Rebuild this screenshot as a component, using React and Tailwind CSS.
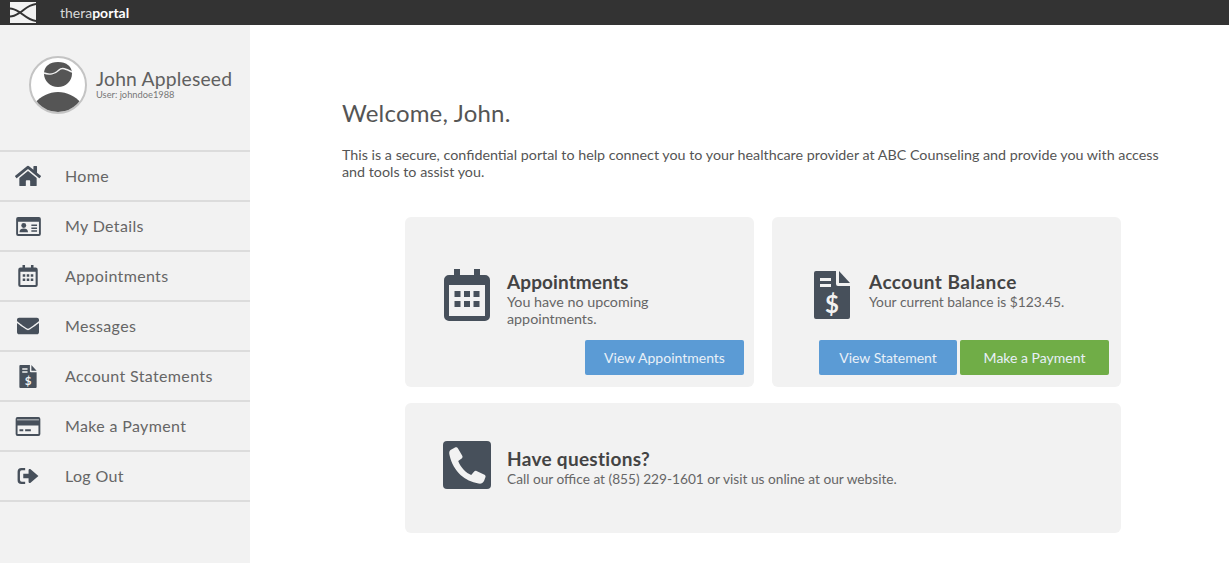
import { FaHome, FaEnvelope } from 'react-icons/fa';

const font = { fontFamily: 'Lato, "Open Sans", sans-serif' };

function IdIcon({ className }) {
  return (
    <svg viewBox="0 0 26 20" className={className} fill="#47505b">
      <path fillRule="evenodd" d="M2 0h22a2 2 0 0 1 2 2v16a2 2 0 0 1-2 2H2a2 2 0 0 1-2-2V2a2 2 0 0 1 2-2zM2 5v13h22V5z" />
      <circle cx="8" cy="9" r="2.6" />
      <path d="M3.500 16c0-3 2-4 4.500-4s4.500 1 4.500 4zM16 8h6v1.500h-6zM16 11h6v1.500h-6zM16 14h6v1.500h-6z" />
    </svg>
  );
}

function CalendarIcon({ className }) {
  return (
    <svg viewBox="0 0 46 52" className={className} fill="#47505b">
      <path fillRule="evenodd" d="M10 0h6v6h14V0h6v6h5a5 5 0 0 1 5 5v36a5 5 0 0 1-5 5H5a5 5 0 0 1-5-5V11a5 5 0 0 1 5-5h5zM5 16v31h36V16z" />
      <path d="M10.500 22h6v6h-6zM20 22h6v6h-6zM29.500 22h6v6h-6zM10.500 32h6v6h-6zM20 32h6v6h-6zM29.500 32h6v6h-6z" />
    </svg>
  );
}

function StatementIcon({ className }) {
  return (
    <svg viewBox="0 0 36 48" className={className}>
      <path fill="#47505b" d="M2 0h20v13a2 2 0 0 0 2 2h12v31a2 2 0 0 1-2 2H2a2 2 0 0 1-2-2V2a2 2 0 0 1 2-2z" />
      <path fill="#47505b" d="M25 0l11 12H25z" />
      <path fill="#f2f2f2" d="M6 7h11v3H6zM6 13h11v3H6z" />
      <text x="18" y="42" textAnchor="middle" fontSize="24" fontWeight="700" fill="#f2f2f2" fontFamily="Lato, sans-serif">$</text>
    </svg>
  );
}

function CardIcon({ className }) {
  return (
    <svg viewBox="0 0 26 20" className={className} fill="#47505b">
      <path fillRule="evenodd" d="M2 0h22a2 2 0 0 1 2 2v16a2 2 0 0 1-2 2H2a2 2 0 0 1-2-2V2a2 2 0 0 1 2-2zM1.500 2.500v1h23v-1zM2 9v9h22V9z" />
      <path d="M4 13h4v2H4zM10 13h6v2h-6z" />
    </svg>
  );
}

function LogOutIcon({ className }) {
  return (
    <svg viewBox="0 0 22 19" className={className} fill="#47505b">
      <path d="M4 1h4v2.500H4.500a2 2 0 0 0-2 2v8a2 2 0 0 0 2 2H8V18H4a4 4 0 0 1-4-4V5a4 4 0 0 1 4-4z" />
      <path d="M12 2.500c.5-.5 1.300-.5 1.700 0L22 9.500l-8.300 7c-.4.500-1.200.5-1.700 0-.3-.2-.4-.6-.4-1V12H6V7h5.600V3.500c0-.4.100-.8.400-1z" />
    </svg>
  );
}

function PhoneIcon({ className }) {
  return (
    <svg viewBox="0 0 48 48" className={className}>
      <rect width="48" height="48" rx="4" fill="#47505b" />
      <path fill="#f2f2f2" d="M12 6.500 7.500 9c-1.500 1-1.500 3-1 5 2 9 6 15 11 20 5 4.500 11 7 18 8.500 2.500.5 4.500-.5 5.500-2.500l1.500-4c.3-1-.2-1.800-1-2.300l-8-3.700c-.8-.4-1.700-.2-2.300.5l-3 3.500c-5-2-10.500-7.500-13-14l3.500-2.500c.8-.6 1-1.500.7-2.400L15 7.500c-.5-1-1.800-1.500-3-1z" />
    </svg>
  );
}

function Logo() {
  return (
    <svg viewBox="0 0 26 21" className="h-[21px] w-[26px]" fill="none">
      <rect width="26" height="21" fill="#f2f2f2" />
      <path stroke="#333" strokeWidth="2" d="M0 6.500C4 6.500 6 8 10 10.500 14 13 18 18 26 19M0 14.500C4 14.500 6 13 10 10.500 14 8 18 3 26 2" />
    </svg>
  );
}

function Avatar() {
  return (
    <div className="h-[58px] w-[58px] overflow-hidden rounded-full border-2 border-[#c4c4c4] bg-white">
      <svg viewBox="0 0 54 54" className="h-full w-full">
        <path fill="#555" d="M27 4c8.500 0 14 4.500 14 11.500C41 23 35 29 27 29S13 23 13 15.500C13 8.500 18.500 4 27 4z" />
        <path fill="none" stroke="#f2f2f2" strokeWidth="1.500" d="M13 15C18 17 24 16 28 12 31 9 35 11 41 14" />
        <path fill="#555" d="M4 45c6-7 14-11 23-11s17 4 23 11c-5 6-14 9-23 9S9 51 4 45z" />
      </svg>
    </div>
  );
}

const navItems = [
  { label: 'Home', icon: <FaHome className="h-[24px] w-[26px] text-[#47505b]" /> },
  { label: 'My Details', icon: <IdIcon className="h-[19px] w-[25px]" /> },
  { label: 'Appointments', icon: <CalendarIcon className="h-[22px] w-[20px]" /> },
  { label: 'Messages', icon: <FaEnvelope className="h-[22px] w-[24px] text-[#47505b]" /> },
  { label: 'Account Statements', icon: <StatementIcon className="h-[23px] w-[18px]" /> },
  { label: 'Make a Payment', icon: <CardIcon className="h-[19px] w-[26px]" /> },
  { label: 'Log Out', icon: <LogOutIcon className="h-[18px] w-[22px]" /> },
];

function Sidebar() {
  return (
    <aside className="w-[250px] shrink-0 bg-[#f2f2f2]">
      <div className="flex h-[125px] items-start gap-[9px] pl-[29px] pt-[31px]">
        <Avatar />
        <div className="pt-[12px]">
          <div className="text-[19.300px] leading-[22px] tracking-[0.2px] text-[#606060]">John Appleseed</div>
          <div className="text-[9.300px] leading-[10px] text-[#777]">User: johndoe1988</div>
        </div>
      </div>
      <nav className="border-t-2 border-[#dcdcdc]">
        {navItems.map((item) => (
          <div key={item.label} className="flex h-[50px] items-center border-b-2 border-[#dcdcdc]">
            <div className="flex w-[56px] shrink-0 justify-center">{item.icon}</div>
            <span className="pl-[9px] text-[16px] tracking-[0.35px] text-[#666]">{item.label}</span>
          </div>
        ))}
      </nav>
    </aside>
  );
}

function Button({ color, className, children }) {
  return (
    <div className={`flex h-[35px] items-center justify-center rounded-[2px] text-[14px] text-[#e8f0f8] ${color} ${className}`}>
      {children}
    </div>
  );
}

export default function App() {
  return (
    <div className="flex h-[563px] w-[1229px] flex-col overflow-hidden bg-white" style={font}>
      <header className="flex h-[25px] shrink-0 items-center bg-[#333333] pl-[10px]">
        <Logo />
        <div className="pl-[24px] text-[14px] text-[#d9d9d9]">
          thera<span className="font-bold text-white">portal</span>
        </div>
      </header>
      <div className="flex flex-1">
        <Sidebar />
        <main className="flex-1 pl-[92px] pr-[60px] pt-[74px]">
          <h1 className="text-[24px] leading-[28px] tracking-[0.2px] text-[#555]">Welcome, John.</h1>
          <p className="mt-[19px] w-[825px] text-[14.300px] leading-[17px] text-[#555]">
            This is a secure, confidential portal to help connect you to your healthcare provider at ABC Counseling and provide you with access and tools to assist you.
          </p>
          <div className="ml-[63px] mt-[37px] grid w-[716px] grid-cols-[349px_349px] gap-x-[18px] gap-y-[16px]">
            <section className="flex h-[170px] flex-col rounded-[6px] bg-[#f2f2f2] pl-[39px] pr-[10px] pt-[52px]">
              <div className="flex gap-[17px]">
                <CalendarIcon className="h-[52px] w-[46px] shrink-0" />
                <div className="w-[180px] pt-[2px]">
                  <h2 className="text-[19px] font-bold leading-[22px] tracking-[0.1px] text-[#444]">Appointments</h2>
                  <p className="text-[14.300px] leading-[17px] text-[#666]">You have no upcoming appointments.</p>
                </div>
              </div>
              <div className="mt-[13px] flex h-[35px] justify-end">
                <Button color="bg-[#5b9bd5]" className="w-[159px]">View Appointments</Button>
              </div>
            </section>
            <section className="flex h-[170px] flex-col rounded-[6px] bg-[#f2f2f2] pl-[42px] pr-[12px] pt-[54px]">
              <div className="flex gap-[19px]">
                <StatementIcon className="h-[48px] w-[36px] shrink-0" />
                <div>
                  <h2 className="text-[19px] font-bold leading-[22px] tracking-[0.45px] text-[#444]">Account Balance</h2>
                  <p className="text-[13.800px] leading-[17px] text-[#666]">Your current balance is $123.45.</p>
                </div>
              </div>
              <div className="mt-[21px] flex justify-end gap-[3px]">
                <Button color="bg-[#5b9bd5]" className="w-[138px]">View Statement</Button>
                <Button color="bg-[#70ad47]" className="w-[149px]">Make a Payment</Button>
              </div>
            </section>
            <section className="col-span-2 flex h-[130px] items-start gap-[16px] rounded-[6px] bg-[#f2f2f2] pl-[38px] pt-[38px]">
              <PhoneIcon className="h-[48px] w-[48px] shrink-0" />
              <div className="pt-[7px]">
                <h2 className="text-[19px] font-bold leading-[22px] tracking-[0.3px] text-[#444]">Have questions?</h2>
                <p className="text-[13.700px] leading-[17px] text-[#666]">Call our office at (855) 229-1601 or visit us online at our website.</p>
              </div>
            </section>
          </div>
        </main>
      </div>
    </div>
  );
}
